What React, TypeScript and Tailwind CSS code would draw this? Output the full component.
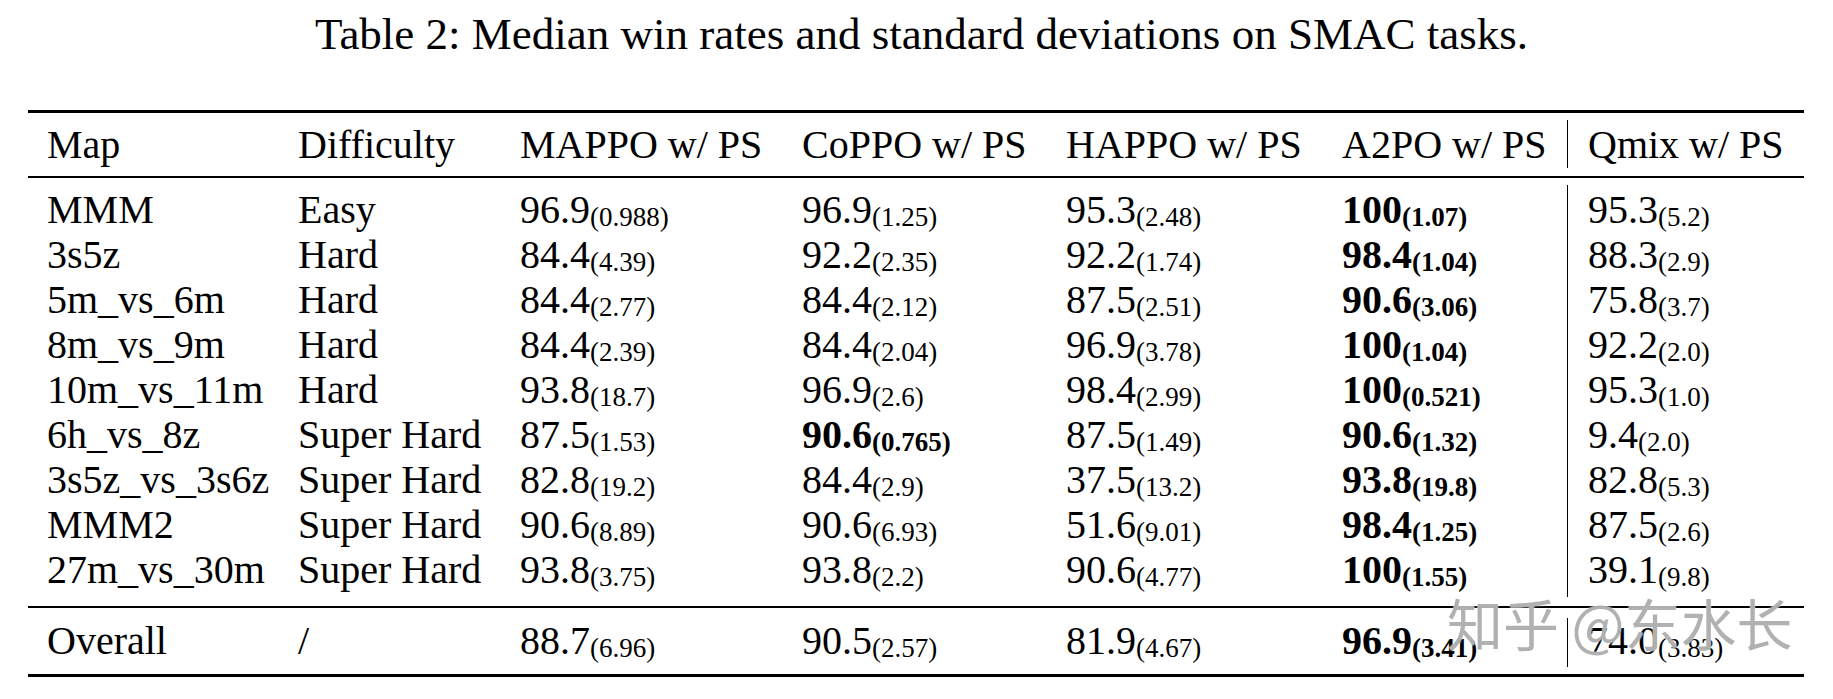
import React from 'react';

type Cell = { v: string; sd: string; bold?: boolean };
type Row = { map: string; diff: string; cells: Cell[]; qmix: Cell };

const c = (v: string, sd: string, bold = false): Cell => ({ v, sd, bold });

const rows: Row[] = [
  { map: 'MMM', diff: 'Easy', cells: [c('96.9', '0.988'), c('96.9', '1.25'), c('95.3', '2.48'), c('100', '1.07', true)], qmix: c('95.3', '5.2') },
  { map: '3s5z', diff: 'Hard', cells: [c('84.4', '4.39'), c('92.2', '2.35'), c('92.2', '1.74'), c('98.4', '1.04', true)], qmix: c('88.3', '2.9') },
  { map: '5m_vs_6m', diff: 'Hard', cells: [c('84.4', '2.77'), c('84.4', '2.12'), c('87.5', '2.51'), c('90.6', '3.06', true)], qmix: c('75.8', '3.7') },
  { map: '8m_vs_9m', diff: 'Hard', cells: [c('84.4', '2.39'), c('84.4', '2.04'), c('96.9', '3.78'), c('100', '1.04', true)], qmix: c('92.2', '2.0') },
  { map: '10m_vs_11m', diff: 'Hard', cells: [c('93.8', '18.7'), c('96.9', '2.6'), c('98.4', '2.99'), c('100', '0.521', true)], qmix: c('95.3', '1.0') },
  { map: '6h_vs_8z', diff: 'Super Hard', cells: [c('87.5', '1.53'), c('90.6', '0.765', true), c('87.5', '1.49'), c('90.6', '1.32', true)], qmix: c('9.4', '2.0') },
  { map: '3s5z_vs_3s6z', diff: 'Super Hard', cells: [c('82.8', '19.2'), c('84.4', '2.9'), c('37.5', '13.2'), c('93.8', '19.8', true)], qmix: c('82.8', '5.3') },
  { map: 'MMM2', diff: 'Super Hard', cells: [c('90.6', '8.89'), c('90.6', '6.93'), c('51.6', '9.01'), c('98.4', '1.25', true)], qmix: c('87.5', '2.6') },
  { map: '27m_vs_30m', diff: 'Super Hard', cells: [c('93.8', '3.75'), c('93.8', '2.2'), c('90.6', '4.77'), c('100', '1.55', true)], qmix: c('39.1', '9.8') },
];

const overall: Row = {
  map: 'Overall',
  diff: '/',
  cells: [c('88.7', '6.96'), c('90.5', '2.57'), c('81.9', '4.67'), c('96.9', '3.41', true)],
  qmix: c('74.0', '3.83'),
};

const widths = ['w-[282px]', 'w-[264px]', 'w-[276px]', 'w-[225px]'];

function Value({ cell }: { cell: Cell }) {
  return (
    <span className={cell.bold ? 'font-bold' : ''}>
      {cell.v}
      <span className="text-[27px] leading-none align-[-3px]">({cell.sd})</span>
    </span>
  );
}

function DataRow({ row, vrule }: { row: Row; vrule: string }) {
  return (
    <div className="flex items-start pl-[19px] leading-[45px]">
      <div className="w-[251px] h-[45px] whitespace-nowrap">{row.map}</div>
      <div className="w-[222px] h-[45px] whitespace-nowrap">{row.diff}</div>
      {row.cells.map((cell, i) => (
        <div key={i} className={`${widths[i]} h-[45px] whitespace-nowrap`}>
          <Value cell={cell} />
        </div>
      ))}
      <div className={`flex-1 border-l border-black pl-[20px] whitespace-nowrap ${vrule}`}>
        <div className="h-[45px]">
          <Value cell={row.qmix} />
        </div>
      </div>
    </div>
  );
}

export default function App() {
  return (
    <div className="relative w-[1833px] h-[699px] bg-white text-black font-['Liberation_Serif','Times_New_Roman',serif] overflow-hidden">
      <div className="pt-[8px] pl-[10px] text-center text-[45px] leading-[52px]">
        Table 2: Median win rates and standard deviations on SMAC tasks.
      </div>

      <div className="ml-[28px] mt-[50px] w-[1776px] text-[40px]">
        {/* header */}
        <div className="border-t-[3px] border-black flex items-start pl-[19px] leading-[45px] h-[66px]">
          <div className="w-[251px] pt-[9px]">Map</div>
          <div className="w-[222px] pt-[9px]">Difficulty</div>
          <div className="w-[282px] pt-[9px] whitespace-nowrap">MAPPO w/ PS</div>
          <div className="w-[264px] pt-[9px] whitespace-nowrap">CoPPO w/ PS</div>
          <div className="w-[276px] pt-[9px] whitespace-nowrap">HAPPO w/ PS</div>
          <div className="w-[225px] pt-[9px] whitespace-nowrap">A2PO w/ PS</div>
          <div className="flex-1 mt-[7px] pt-[2px] pb-[1px] border-l border-black pl-[20px] whitespace-nowrap">
            Qmix w/ PS
          </div>
        </div>

        {/* body */}
        <div className="border-t-2 border-black pt-[9px] pb-[9px]">
          {rows.map((row, i) => (
            <DataRow
              key={row.map}
              row={row}
              vrule={i === 0 ? '-mt-[2px] pt-[2px]' : i === rows.length - 1 ? 'pb-[5px]' : ''}
            />
          ))}
        </div>

        {/* overall */}
        <div className="border-t-2 border-b-[3px] border-black pt-[10px] pb-[7px]">
          <DataRow row={overall} vrule="pb-[4px]" />
        </div>
      </div>

      {/* watermark */}
      <div className="absolute left-[1447px] top-[590px] text-[56px] leading-[64px] text-[#a9a9a9]/90 font-['Noto_Sans_CJK_SC',sans-serif] whitespace-nowrap [text-shadow:0_0_2px_#ffffff]">
        知乎 @东水长
      </div>
    </div>
  );
}
